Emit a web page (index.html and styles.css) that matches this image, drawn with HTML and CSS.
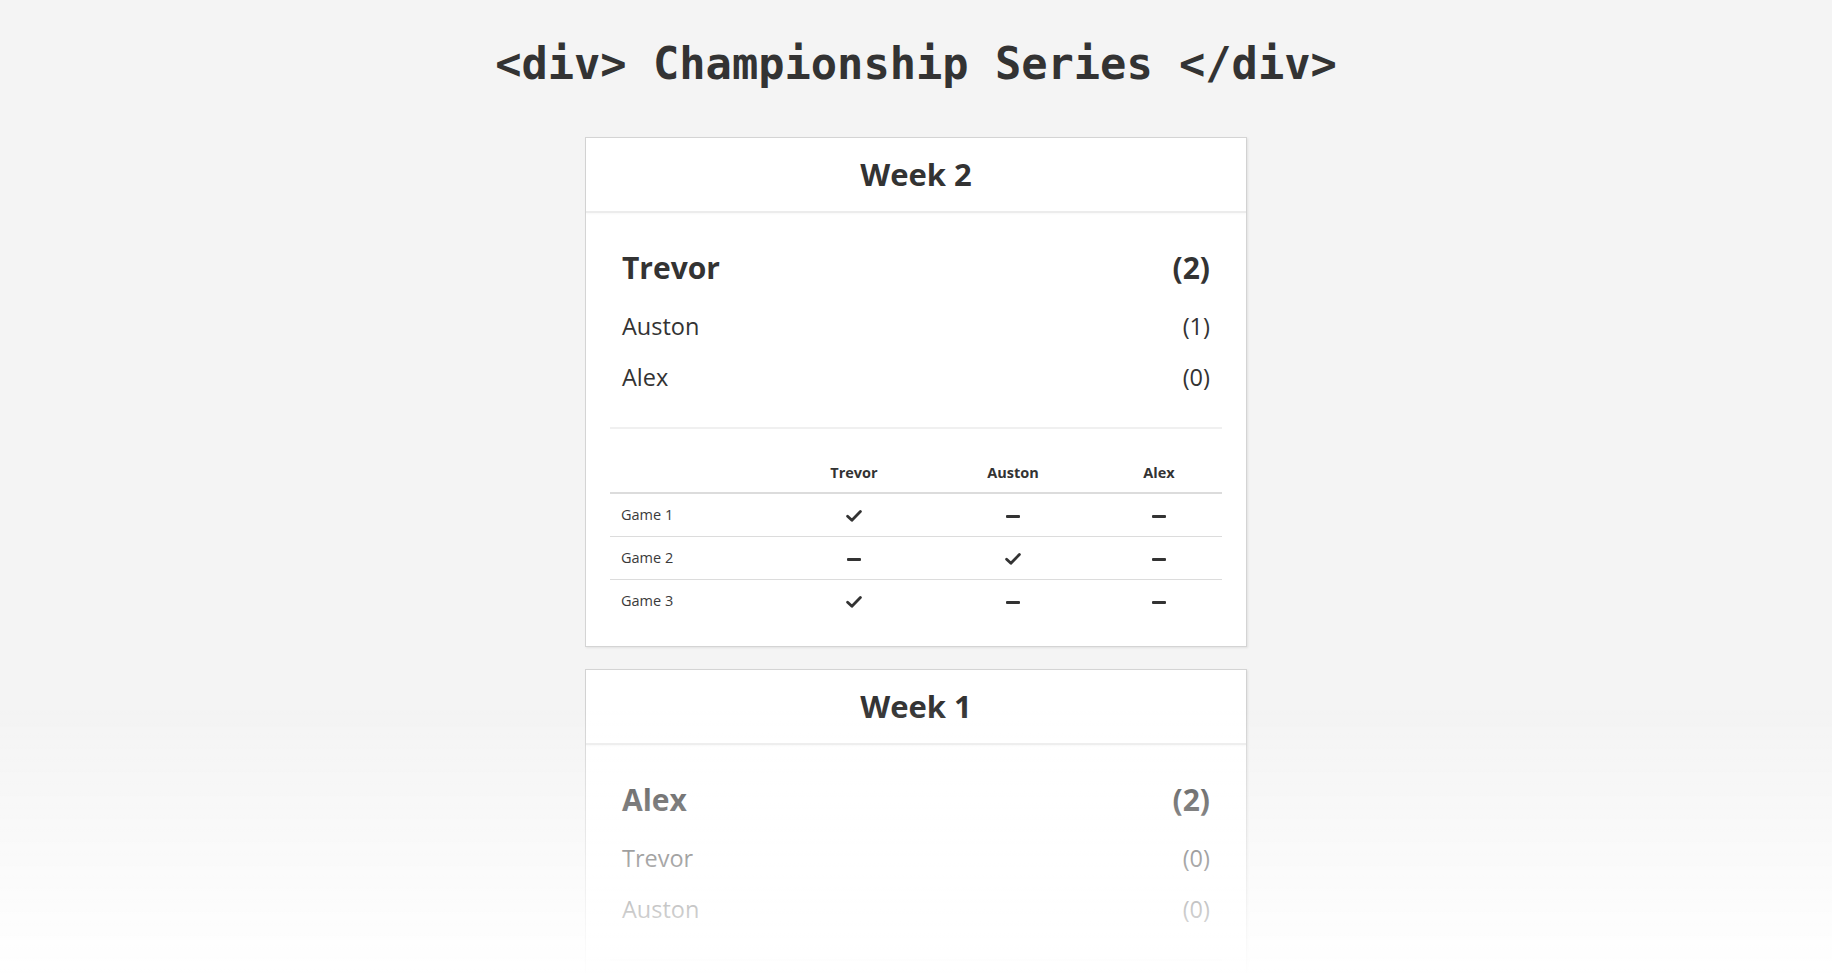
FILE: index.html
```html
<!DOCTYPE html>
<html lang="en">
<head>
<meta charset="utf-8">
<title>Championship Series</title>
<link rel="stylesheet" href="styles.css">
</head>
<body>
<h1 class="title">&lt;div&gt; Championship Series &lt;/div&gt;</h1>
<main class="weeks">
  <section class="card">
    <header class="card-head"><h2 class="card-title">Week 2</h2></header>
    <div class="card-body">
      <ol class="standings">
        <li class="standing winner"><span class="name">Trevor</span><span class="score">(2)</span></li>
        <li class="standing"><span class="name">Auston</span><span class="score">(1)</span></li>
        <li class="standing"><span class="name">Alex</span><span class="score">(0)</span></li>
      </ol>
      <hr class="divider">
      <table class="games">
        <colgroup><col class="c-game"><col class="c-p1"><col class="c-p2"><col class="c-p3"></colgroup>
        <thead>
          <tr><th class="game-col"></th><th>Trevor</th><th>Auston</th><th>Alex</th></tr>
        </thead>
        <tbody>
          <tr><td class="game">Game 1</td>
            <td><svg class="ico check" viewBox="0 0 16 12"><polyline points="1.6,6.2 5.9,10.3 14.4,1.6"/></svg></td>
            <td><svg class="ico dash" viewBox="0 0 14 3"><rect width="14" height="3" rx="1"/></svg></td>
            <td><svg class="ico dash" viewBox="0 0 14 3"><rect width="14" height="3" rx="1"/></svg></td></tr>
          <tr><td class="game">Game 2</td>
            <td><svg class="ico dash" viewBox="0 0 14 3"><rect width="14" height="3" rx="1"/></svg></td>
            <td><svg class="ico check" viewBox="0 0 16 12"><polyline points="1.6,6.2 5.9,10.3 14.4,1.6"/></svg></td>
            <td><svg class="ico dash" viewBox="0 0 14 3"><rect width="14" height="3" rx="1"/></svg></td></tr>
          <tr><td class="game">Game 3</td>
            <td><svg class="ico check" viewBox="0 0 16 12"><polyline points="1.6,6.2 5.9,10.3 14.4,1.6"/></svg></td>
            <td><svg class="ico dash" viewBox="0 0 14 3"><rect width="14" height="3" rx="1"/></svg></td>
            <td><svg class="ico dash" viewBox="0 0 14 3"><rect width="14" height="3" rx="1"/></svg></td></tr>
        </tbody>
      </table>
    </div>
  </section>

  <section class="card">
    <header class="card-head"><h2 class="card-title">Week 1</h2></header>
    <div class="card-body">
      <ol class="standings">
        <li class="standing winner"><span class="name">Alex</span><span class="score">(2)</span></li>
        <li class="standing"><span class="name">Trevor</span><span class="score">(0)</span></li>
        <li class="standing"><span class="name">Auston</span><span class="score">(0)</span></li>
      </ol>
      <hr class="divider">
      <div class="games-spacer"></div>
    </div>
  </section>
</main>
<div class="fade" aria-hidden="true"></div>
</body>
</html>
```

FILE: styles.css
```css
* { box-sizing: border-box; }

html, body {
  margin: 0;
  padding: 0;
}

body {
  background: #f4f4f4;
  color: #333;
  font-family: "Open Sans", "Noto Sans", sans-serif;
  overflow: hidden;
  height: 973px;
}

.title {
  margin: 0;
  padding-top: 38px;
  font-family: "DejaVu Sans Mono", "Liberation Mono", monospace;
  font-size: 43.7px;
  line-height: 52px;
  font-weight: bold;
  text-align: center;
  color: #333;
}

.weeks {
  width: 662px;
  margin: 47px auto 0;
  display: flex;
  flex-direction: column;
  gap: 22px;
}

.card {
  background: #fff;
  border: 1px solid #d4d4d4;
  box-shadow: 1px 1px 2px rgba(0, 0, 0, 0.08);
}

.card-head {
  border-bottom: 2px solid #ececec;
  box-shadow: 0 1px 2px rgba(0, 0, 0, 0.03);
}

.card-title {
  margin: 0;
  font-size: 31px;
  line-height: 73px;
  font-weight: 700;
  text-align: center;
  color: #333;
}

.card-body {
  padding: 21px 24px 24px;
}

.standings {
  list-style: none;
  margin: 0 0 25px;
  padding: 0 12px;
}

.standing {
  display: flex;
  justify-content: space-between;
  align-items: center;
  font-size: 23.5px;
  line-height: 36px;
  padding: 7.5px 0;
}

.standing.winner {
  font-size: 30px;
  font-weight: 700;
  line-height: 51px;
}

.divider {
  margin: 0;
  border: 0;
  height: 2px;
  background: #f0f0f0;
}

.games {
  width: 100%;
  margin-top: 24px;
  border-collapse: collapse;
  table-layout: fixed;
  font-size: 14.5px;
}

.games-spacer {
  height: 180px;
}

.c-game { width: 168px; }
.c-p1 { width: 152px; }
.c-p2 { width: 166px; }
.c-p3 { width: 126px; }

.games th {
  height: 40px;
  padding: 0;
  text-align: center;
  vertical-align: middle;
  font-weight: 700;
  line-height: 20px;
  border-bottom: 2px solid #dcdcdc;
}

.games td {
  height: 43px;
  padding: 0;
  text-align: center;
  vertical-align: middle;
}

.games tbody tr + tr td {
  border-top: 1px solid #dcdcdc;
}

.games td.game {
  text-align: left;
  padding-left: 11px;
  color: #3a3a3a;
}

.ico {
  display: inline-block;
  vertical-align: middle;
}

.check {
  width: 16px;
  height: 12px;
}

.check polyline {
  fill: none;
  stroke: #333;
  stroke-width: 2.8;
  stroke-linecap: round;
  stroke-linejoin: round;
}

.dash {
  width: 14px;
  height: 3px;
}

.dash rect { fill: #333; }

.fade {
  position: fixed;
  left: 0;
  right: 0;
  bottom: 0;
  height: 270px;
  background: linear-gradient(to bottom, rgba(255, 255, 255, 0) 0%, rgba(255, 255, 255, 0.97) 100%);
  pointer-events: none;
}
```
